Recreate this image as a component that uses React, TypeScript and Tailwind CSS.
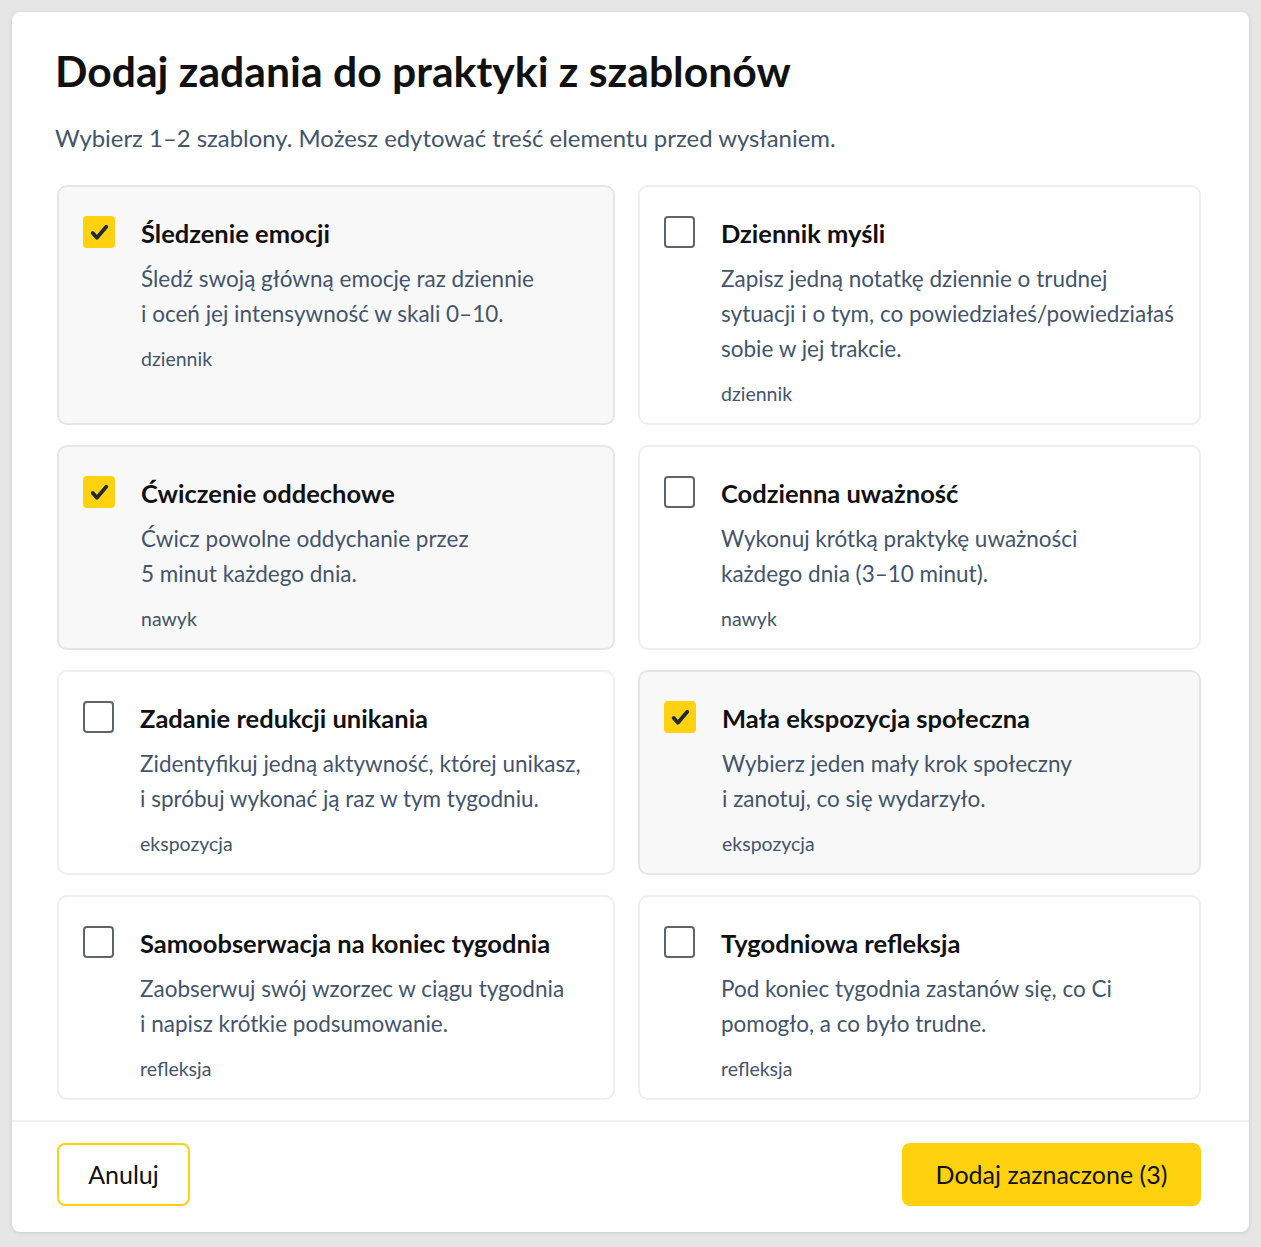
import { useState } from "react";

type Template = {
  id: string;
  title: string;
  description: string[];
  tag: string;
};

const templates: Template[] = [
  {
    id: "emotions",
    title: "Śledzenie emocji",
    description: ["Śledź swoją główną emocję raz dziennie", "i oceń jej intensywność w skali 0–10."],
    tag: "dziennik",
  },
  {
    id: "thoughts",
    title: "Dziennik myśli",
    description: [
      "Zapisz jedną notatkę dziennie o trudnej",
      "sytuacji i o tym, co powiedziałeś/powiedziałaś",
      "sobie w jej trakcie.",
    ],
    tag: "dziennik",
  },
  {
    id: "breathing",
    title: "Ćwiczenie oddechowe",
    description: ["Ćwicz powolne oddychanie przez", "5 minut każdego dnia."],
    tag: "nawyk",
  },
  {
    id: "mindfulness",
    title: "Codzienna uważność",
    description: ["Wykonuj krótką praktykę uważności", "każdego dnia (3–10 minut)."],
    tag: "nawyk",
  },
  {
    id: "avoidance",
    title: "Zadanie redukcji unikania",
    description: ["Zidentyfikuj jedną aktywność, której unikasz,", "i spróbuj wykonać ją raz w tym tygodniu."],
    tag: "ekspozycja",
  },
  {
    id: "social",
    title: "Mała ekspozycja społeczna",
    description: ["Wybierz jeden mały krok społeczny", "i zanotuj, co się wydarzyło."],
    tag: "ekspozycja",
  },
  {
    id: "selfobs",
    title: "Samoobserwacja na koniec tygodnia",
    description: ["Zaobserwuj swój wzorzec w ciągu tygodnia", "i napisz krótkie podsumowanie."],
    tag: "refleksja",
  },
  {
    id: "weekly",
    title: "Tygodniowa refleksja",
    description: ["Pod koniec tygodnia zastanów się, co Ci", "pomogło, a co było trudne."],
    tag: "refleksja",
  },
];

function Checkbox({ checked }: { checked: boolean }) {
  if (checked) {
    return (
      <span className="mt-[1px] flex h-[32px] w-[32px] shrink-0 items-center justify-center rounded-[4px] bg-[#ffd10f]">
        <svg viewBox="0 0 24 24" className="h-[25px] w-[25px]" fill="none" stroke="#1f2937" strokeWidth="3.6" strokeLinecap="round" strokeLinejoin="round">
          <path d="M5.5 12.5l4 4.5L18.5 6.5" />
        </svg>
      </span>
    );
  }
  return <span className="mt-[1px] h-[32px] w-[31px] shrink-0 rounded-[4px] border-2 border-[#5f646c] bg-white" />;
}

export default function App() {
  const [selected, setSelected] = useState<string[]>(["emotions", "breathing", "social"]);

  const toggle = (id: string) =>
    setSelected((prev) => (prev.includes(id) ? prev.filter((x) => x !== id) : [...prev, id]));

  return (
    <div className="min-h-[1247px] bg-[#e6e6e6] p-[12px] font-['Lato',sans-serif]">
      <div className="rounded-[8px] bg-white shadow-[0_1px_4px_rgba(0,0,0,0.12)]">
        <div className="pt-[34px] pr-[43px] pb-[20px] pl-[43px]">
          <h1 className="text-[42.7px] leading-[50px] font-bold text-[#111111]">
            Dodaj zadania do praktyki z szablonów
          </h1>
          <p className="mt-[27px] text-[23.9px] leading-[30px] text-[#44546a]">
            Wybierz 1–2 szablony. Możesz edytować treść elementu przed wysłaniem.
          </p>

          <div className="mt-[32px] grid grid-cols-[558px_563px] gap-x-[23px] gap-y-[20px] pl-[2px]">
            {templates.map((t) => {
              const checked = selected.includes(t.id);
              return (
                <button
                  key={t.id}
                  onClick={() => toggle(t.id)}
                  className={`flex items-start gap-[26px] rounded-[10px] border-2 px-[24px] pt-[28px] pb-[15px] text-left ${
                    checked ? "border-[#e3e5e8] bg-[#f8f8f9]" : "border-[#eeeff1] bg-white"
                  }`}
                >
                  <Checkbox checked={checked} />
                  <div className="flex flex-col">
                    <h3 className="text-[25.5px] leading-[36px] font-bold whitespace-nowrap text-[#111111]">{t.title}</h3>
                    <p className="mt-[10px] text-[22.5px] leading-[35px] text-[#44546a]">
                      {t.description.map((line) => (
                        <span key={line} className="block whitespace-nowrap">
                          {line}
                        </span>
                      ))}
                    </p>
                    <span className="mt-[14px] text-[19.5px] leading-[28px] text-[#44546a]">{t.tag}</span>
                  </div>
                </button>
              );
            })}
          </div>
        </div>

        <div className="flex items-center justify-between border-t-2 border-[#f1f2f4] pt-[21px] pr-[48px] pb-[26px] pl-[45px]">
          <button className="h-[63px] w-[133px] rounded-[8px] border-2 border-[#ffd10f] bg-white text-[25px] text-[#111111]">
            Anuluj
          </button>
          <button className="h-[63px] w-[299px] rounded-[8px] bg-[#ffd10f] text-[25px] text-[#111111]">
            Dodaj zaznaczone ({selected.length})
          </button>
        </div>
      </div>
    </div>
  );
}
